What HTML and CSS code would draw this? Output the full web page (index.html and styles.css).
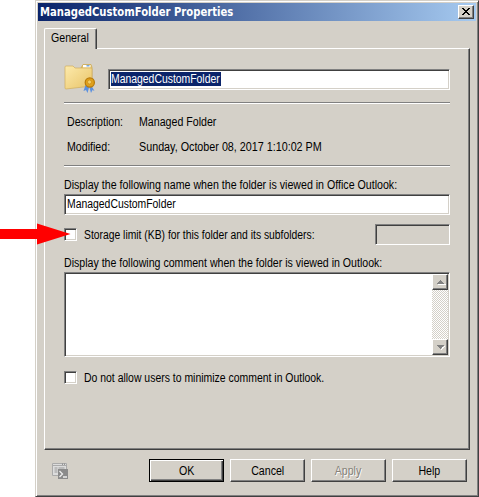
FILE: index.html
```html
<!DOCTYPE html>
<html lang="en">
<head>
<meta charset="utf-8">
<title>ManagedCustomFolder Properties</title>
<link rel="stylesheet" href="styles.css">
</head>
<body>
<main class="dialog">
  <header class="titlebar">
    <span class="title">ManagedCustomFolder Properties</span>
    <div class="close"><svg width="8" height="7" viewBox="0 0 8 7" shape-rendering="crispEdges"><path d="M0 0h2v1h1v1h2v-1h1v-1h2v1h-1v1h-1v1h-1v1h1v1h1v1h1v1h-2v-1h-1v-1h-2v1h-1v1h-2v-1h1v-1h1v-1h1v-1h-1v-1h-1v-1h-1z"/></svg></div>
  </header>
  <div class="tab"><span class="text">General</span></div>
  <section class="panel">
    <div class="identity">
      <svg class="folder" width="34" height="32" viewBox="0 0 34 32">
        <defs><linearGradient id="f" x1="0" y1="0" x2="1" y2="1"><stop stop-color="#fdeaac"/><stop offset="1" stop-color="#e8c468"/></linearGradient></defs>
        <path d="M17 5L19 1.500h8l1 3v18H10z" fill="#e8c466" stroke="#c9a650" stroke-width=".7"/>
        <rect x="19" y="2" width="7.500" height="2.500" fill="#fff"/><rect x="22.500" y="2" width="3" height="1.500" fill="#78a8db"/>
        <path d="M1 4q0-1 1-1h7l2 2h16q1 0 1 1v17L2 26q-1 0-1-1z" fill="url(#f)" stroke="#d0ad5c" stroke-width=".7"/>
        <path d="M21.500 22l-2 6 2.500-1 1.500 3 2-7zM27 22l3.500 6-2-1-1.500 3-2-7z" fill="#5b91e0"/>
        <circle cx="25.800" cy="19.500" r="4.600" fill="#dfa01b" stroke="#b87a08" stroke-width="1.200"/>
        <circle cx="25.500" cy="19" r="2" fill="#f5cf65" stroke="#c98b14" stroke-width=".7"/>
      </svg>
      <div class="field name-field"><span class="selected"><span class="text t-sel">ManagedCustomFolder</span></span></div>
    </div>
    <hr>
    <dl>
      <dt><span class="text">Description:</span></dt><dd><span class="text">Managed Folder</span></dd>
      <dt><span class="text">Modified:</span></dt><dd><span class="text t-date">Sunday, October 08, 2017 1:10:02 PM</span></dd>
    </dl>
    <hr>
    <div class="caption first"><span class="text t-name">Display the following name when the folder is viewed in Office Outlook:</span></div>
    <div class="field display-field"><span class="text t-sel">ManagedCustomFolder</span></div>
    <div class="limit">
      <span class="check"></span><span class="text t-limit">Storage limit (KB) for this folder and its subfolders:</span>
      <div class="field disabled"></div>
    </div>
    <div class="caption second"><span class="text t-comment">Display the following comment when the folder is viewed in Outlook:</span></div>
    <div class="field comment">
      <div class="scroll">
        <div class="scroll-button"><svg width="9" height="5" viewBox="0 0 9 5" shape-rendering="crispEdges"><path d="M1 4h8v1H1z" fill="#fff"/><path d="M3 0h1v1h1v1h1v1h1v1H0V3h1V2h1V1h1z" fill="#808080"/></svg></div>
        <div class="scroll-button"><svg width="9" height="5" viewBox="0 0 9 5" shape-rendering="crispEdges"><path d="M7 1h1v1H7v1H6v1H5v1H4V4h1V2h2z" fill="#fff"/><path d="M0 0h7v1H6v1H5v1H4v1H3V3H2V2H1V1H0z" fill="#808080"/></svg></div>
      </div>
    </div>
    <div class="minimize"><span class="check"></span><span class="text t-min">Do not allow users to minimize comment in Outlook.</span></div>
  </section>
  <footer>
    <svg class="shell" width="16" height="16" viewBox="0 0 16 16">
      <path d="M.5.5h14v12H.5z" fill="#ddd" stroke="#aaa"/><path d="M1 2.500h13" stroke="#aaa"/><path d="M10 1.200h1m1 0h1" stroke="#777"/>
      <path d="M2.500 5h3m1 0h6M2.500 7h3M2.500 9h3" stroke="#999"/><path d="M6 6h10v10H6z" fill="#8b8b8b"/>
      <path d="M7.500 8l3 3-3 3M11 14h4" fill="none" stroke="#eee" stroke-width="1.300"/>
    </svg>
    <div class="button default"><span class="text">OK</span></div>
    <div class="button"><span class="text">Cancel</span></div>
    <div class="button off"><span class="text">Apply</span></div>
    <div class="button"><span class="text">Help</span></div>
  </footer>
</main>
<svg class="arrow" width="71" height="22" viewBox="0 0 71 22"><path d="M0 6h37V0.500L70.500 11 37 21.500V16H0z" fill="#f00"/></svg>
</body>
</html>
```
FILE: styles.css
```css
* { box-sizing: border-box; }
body { margin: 0; background: #fff; color: #000; font: 12px/14px "Liberation Sans", Arial, sans-serif; overflow: hidden; }
svg { display: block; }
.dialog {
  width: 444px; height: 497px; margin-left: 35px; padding: 2px 1px 0;
  background: #d4d0c8; border: 1px solid; border-color: #d4d0c8 #404040 #404040 #d4d0c8;
  box-shadow: inset 1px 1px #fff, inset -1px -1px #808080;
}
.titlebar {
  display: flex; align-items: center; justify-content: space-between;
  height: 18px; margin: 0 1px; padding: 0 2px;
  background: linear-gradient(90deg, #0a246a, #a6caf0); color: #fff;
}
.title { display: inline-block; width: 200px; white-space: nowrap; font: bold 12px/16px "DejaVu Sans", Tahoma, sans-serif; transform: scaleX(.838); transform-origin: left; }
.close, .scroll-button, .button {
  background: #d4d0c8; border: 1px solid; border-color: #fff #404040 #404040 #fff;
  box-shadow: inset -1px -1px #808080;
}
.close { width: 16px; height: 14px; padding: 2px 0 0 3px; flex: none; }
.text { display: inline-block; white-space: nowrap; transform: scaleX(.885); transform-origin: left; }
.t-sel { transform: scaleX(.867); }
.t-date { transform: scaleX(.896); }
.t-name { transform: scaleX(.886); }
.t-limit { transform: scaleX(.862); }
.t-comment { transform: scaleX(.882); }
.t-min { transform: scaleX(.87); }
.tab {
  position: relative; z-index: 1; width: 53px; height: 21px; margin: 7px 0 -1px 7px; padding: 2px 0 0 6px;
  background: #d4d0c8; border: solid; border-width: 1px 1px 0; border-color: #fff #404040 #fff #fff;
  border-radius: 2px 2px 0 0; box-shadow: inset -1px 0 #808080;
}
.panel {
  width: 426px; height: 402px; margin-left: 7px; padding: 14px 19px 0;
  border: 1px solid; border-color: #fff #404040 #404040 #fff;
  box-shadow: inset -1px -1px #808080;
}
.identity { display: flex; height: 39px; width: 386px; }
.folder { margin: 0 10px 0 0; flex: none; }
.field {
  height: 21px; padding: 2px 1px; background: #fff; border: 1px solid; border-color: #808080 #fff #fff #808080;
  box-shadow: inset 1px 1px #404040, inset -1px -1px #d4d0c8;
}
.name-field { width: 342px; margin-top: 6px; }
.selected { display: block; width: 110px; height: 14px; margin-left: 1px; background: #0a246a; color: #fff; }
hr { width: 386px; height: 2px; margin: 0; border: 0; border-top: 1px solid #808080; border-bottom: 1px solid #fff; }
dl { display: grid; grid-template-columns: 72px 1fr; align-content: start; row-gap: 11px; height: 61px; margin: 0; padding: 11px 0 0 3px; }
dt, dd { height: 14px; margin: 0; }
.caption { height: 16px; }
.first { margin-top: 11px; }
.display-field, .comment { width: 386px; }
.display-field { padding-left: 2px; }
.limit { display: flex; width: 386px; height: 21px; margin-top: 9px; }
.limit .text { margin-top: 4px; }
.check {
  width: 13px; height: 13px; margin-right: 7px; flex: none; background: #fff; border: 1px solid;
  border-color: #808080 #fff #fff #808080; box-shadow: inset 1px 1px #404040, inset -1px -1px #d4d0c8;
}
.limit .check { margin-top: 4px; }
.disabled { width: 75px; margin-left: auto; background: #d4d0c8; }
.second { margin-top: 11px; }
.comment { height: 85px; padding: 1px; }
.scroll {
  display: flex; flex-direction: column; justify-content: space-between;
  width: 16px; height: 81px; margin-left: auto;
  background: repeating-conic-gradient(#fff 0 25%, #d4d0c8 0 50%) 0 0 / 2px 2px;
}
.scroll-button { width: 16px; height: 16px; padding: 5px 0 0 4px; }
.minimize { display: flex; margin-top: 14px; }
footer { display: flex; padding: 9px 0 0 15px; }
.shell { margin: 4px 81px 0 0; }
.button { display: flex; justify-content: center; width: 75px; height: 23px; margin-right: 6px; padding-top: 4px; }
.button .text { transform-origin: center; }
.default { border-color: #000; box-shadow: inset 1px 1px #fff, inset -1px -1px #404040, inset -2px -2px #808080; }
.off { color: #858179; text-shadow: 1px 1px #fff; }
.arrow { position: absolute; left: 0; top: 223px; }
```
